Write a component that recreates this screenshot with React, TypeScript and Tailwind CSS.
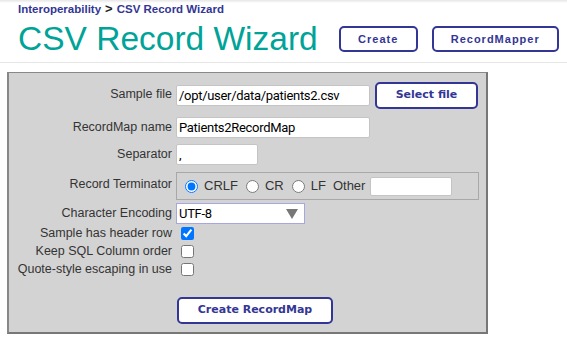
import React from "react";

const navy = "text-[#333695]";

function Row({ label, children, h, labelPt }: { label: string; children: React.ReactNode; h: string; labelPt?: string }) {
  return (
    <div className={`flex ${labelPt ? "items-start" : "items-center"} ${h}`}>
      <div className={`w-[167px] shrink-0 pr-[4px] text-right text-[12.5px] text-[#333] whitespace-nowrap ${labelPt ?? ""}`}>{label}</div>
      <div className="flex items-center">{children}</div>
    </div>
  );
}

function TextBox({ value, w }: { value: string; w: string }) {
  return (
    <div className={`${w} h-[21px] bg-white border border-[#c4c4c4] rounded-[2px] px-[2px] flex items-center text-[13px] tracking-[-0.3px] text-black whitespace-nowrap overflow-hidden`} style={{ fontFamily: "Roboto, 'Liberation Sans', sans-serif" }}>
      {value}
    </div>
  );
}

function Check({ checked }: { checked?: boolean }) {
  return (
    <input type="checkbox" checked={!!checked} readOnly className="m-0 ml-[5px] w-[13px] h-[13px] accent-[#0075ff]" />
  );
}

export default function App() {
  return (
    <div className="w-[567px] h-[348px] bg-white relative overflow-hidden" style={{ fontFamily: "'Liberation Sans', Arial, sans-serif" }}>
      <div className="h-[3px] bg-gradient-to-b from-[#e6e6e6] to-white" />
      <div className="pl-[18px] h-[60px] border-b border-[#e6e6e6]">
        <div className={`text-[11.5px] font-bold ${navy} leading-[12px] flex items-center`}>
          <span>Interoperability</span>
          <span className="text-[#222] text-[13px] mx-[4px]">&gt;</span>
          <span>CSV Record Wizard</span>
        </div>
        <div className="flex items-center mt-[4px]">
          <div className="text-[33.5px] leading-[40px] text-[#00a398] whitespace-nowrap">CSV Record Wizard</div>
          <div className={`ml-[21px] w-[79px] h-[26px] border-2 border-[#333695] rounded-[5px] flex items-center justify-center text-[11px] font-bold tracking-[1px] ${navy}`}>Create</div>
          <div className={`ml-[14px] w-[127px] h-[26px] border-2 border-[#333695] rounded-[5px] flex items-center justify-center text-[11px] font-bold tracking-[1px] ${navy}`}>RecordMapper</div>
        </div>
      </div>

      <div className="ml-[7px] mt-[9px] w-[481px] h-[262px] bg-[#d3d3d3] border-l-2 border-t border-r-2 border-b-2 border-l-[#888] border-t-[#888] border-r-[#777] border-b-[#777] pt-[9px]">
        <Row label="Sample file" h="h-[27px]" labelPt="pt-[3px]">
          <TextBox value="/opt/user/data/patients2.csv" w="w-[194px]" />
          <div className={`ml-[5px] w-[103px] h-[27px] bg-white border-2 border-[#333695] rounded-[5px] flex items-center justify-center text-[11px] font-bold ${navy}`} style={{ fontFamily: "'DejaVu Sans', Verdana, sans-serif" }}>Select file</div>
        </Row>
        <div className="h-[8px]" />
        <Row label="RecordMap name" h="h-[21px]">
          <TextBox value="Patients2RecordMap" w="w-[194px]" />
        </Row>
        <div className="h-[6px]" />
        <Row label="Separator" h="h-[21px]">
          <TextBox value="," w="w-[82px]" />
        </Row>
        <div className="h-[7px]" />
        <Row label="Record Terminator" h="h-[28px]" labelPt="pt-[3px]">
          <div className="w-[303px] h-[28px] border border-[#a8a8a8] flex items-center pl-[8px] text-[13px] text-[#333]">
            <input type="radio" checked readOnly className="m-0 w-[13px] h-[13px] accent-[#0075ff]" />
            <span className="ml-[6px]">CRLF</span>
            <input type="radio" checked={false} readOnly className="m-0 ml-[8px] w-[13px] h-[13px]" />
            <span className="ml-[6px]">CR</span>
            <input type="radio" checked={false} readOnly className="m-0 ml-[8px] w-[13px] h-[13px]" />
            <span className="ml-[6px]">LF</span>
            <span className="ml-[7px]">Other</span>
            <div className="ml-[5px] w-[82px] h-[19px] bg-white border border-[#c4c4c4] rounded-[2px]" />
          </div>
        </Row>
        <div className="h-[3px]" />
        <Row label="Character Encoding" h="h-[21px]">
          <div className="w-[129px] h-[21px] bg-white border border-[#a6a6e0] flex items-center justify-between pl-[2px] pr-[6px] text-[13px] tracking-[-0.3px] text-black" style={{ fontFamily: "Roboto, 'Liberation Sans', sans-serif" }}>
            <span>UTF-8</span>
            <svg width="12" height="10" viewBox="0 0 12 10"><path d="M0 0 H12 L6 10 Z" fill="#777" /></svg>
          </div>
        </Row>
        <Row label="Sample has header row" h="h-[18px]">
          <Check checked />
        </Row>
        <Row label="Keep SQL Column order" h="h-[18px]">
          <Check />
        </Row>
        <Row label="Quote-style escaping in use" h="h-[18px]">
          <Check />
        </Row>
        <div className="h-[19px]" />
        <div className="pl-[168px]">
          <div className={`w-[156px] h-[27px] bg-white border-2 border-[#333695] rounded-[5px] flex items-center justify-center text-[11px] font-bold ${navy}`} style={{ fontFamily: "'DejaVu Sans', Verdana, sans-serif" }}>Create RecordMap</div>
        </div>
      </div>
    </div>
  );
}
